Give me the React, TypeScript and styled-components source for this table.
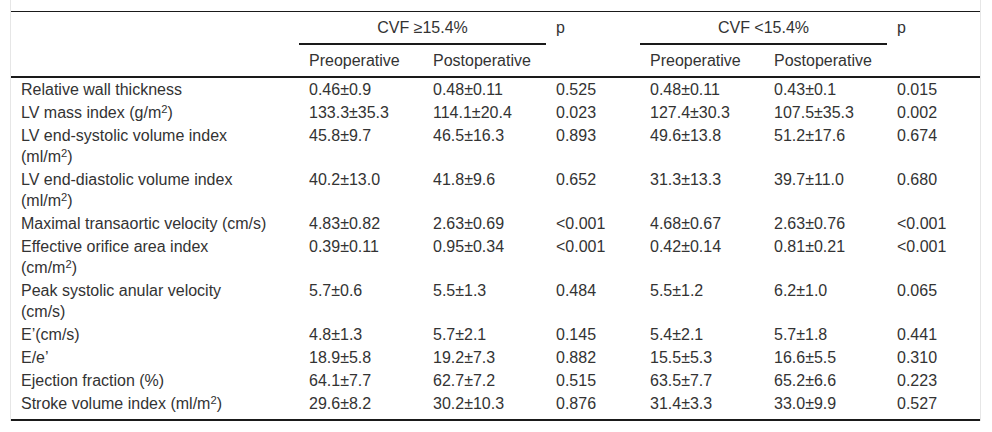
import React from "react";
import styled, { createGlobalStyle } from "styled-components";

const GlobalStyle = createGlobalStyle`
  body {
    margin: 0;
    background: #fff;
    font-family: "Liberation Sans", Arial, sans-serif;
  }
`;

type Row = {
  label: React.ReactNode;
  values: string[];
};

const M2 = ({ unit }: { unit: string }) => (
  <>
    ({unit}/m<Sup>2</Sup>)
  </>
);

const rows: Row[] = [
  {
    label: "Relative wall thickness",
    values: ["0.46±0.9", "0.48±0.11", "0.525", "0.48±0.11", "0.43±0.1", "0.015"],
  },
  {
    label: (
      <>
        LV mass index <M2 unit="g" />
      </>
    ),
    values: ["133.3±35.3", "114.1±20.4", "0.023", "127.4±30.3", "107.5±35.3", "0.002"],
  },
  {
    label: (
      <>
        LV end-systolic volume index <M2 unit="ml" />
      </>
    ),
    values: ["45.8±9.7", "46.5±16.3", "0.893", "49.6±13.8", "51.2±17.6", "0.674"],
  },
  {
    label: (
      <>
        LV end-diastolic volume index <M2 unit="ml" />
      </>
    ),
    values: ["40.2±13.0", "41.8±9.6", "0.652", "31.3±13.3", "39.7±11.0", "0.680"],
  },
  {
    label: "Maximal transaortic velocity (cm/s)",
    values: ["4.83±0.82", "2.63±0.69", "<0.001", "4.68±0.67", "2.63±0.76", "<0.001"],
  },
  {
    label: (
      <>
        Effective orifice area index <M2 unit="cm" />
      </>
    ),
    values: ["0.39±0.11", "0.95±0.34", "<0.001", "0.42±0.14", "0.81±0.21", "<0.001"],
  },
  {
    label: "Peak systolic anular velocity (cm/s)",
    values: ["5.7±0.6", "5.5±1.3", "0.484", "5.5±1.2", "6.2±1.0", "0.065"],
  },
  {
    label: "E’(cm/s)",
    values: ["4.8±1.3", "5.7±2.1", "0.145", "5.4±2.1", "5.7±1.8", "0.441"],
  },
  {
    label: "E/e’",
    values: ["18.9±5.8", "19.2±7.3", "0.882", "15.5±5.3", "16.6±5.5", "0.310"],
  },
  {
    label: "Ejection fraction (%)",
    values: ["64.1±7.7", "62.7±7.2", "0.515", "63.5±7.7", "65.2±6.6", "0.223"],
  },
  {
    label: (
      <>
        Stroke volume index <M2 unit="ml" />
      </>
    ),
    values: ["29.6±8.2", "30.2±10.3", "0.876", "31.4±3.3", "33.0±9.9", "0.527"],
  },
];

const colWidths = [288, 124, 123, 94, 124, 123, 93];

const App = () => {
  return (
    <>
      <GlobalStyle />
      <Frame>
        <Table>
          <colgroup>
            {colWidths.map((w, i) => (
              <col key={i} style={{ width: w }} />
            ))}
          </colgroup>
          <thead>
            <tr>
              <HeadCell rowSpan={2} $rule="thick" />
              <HeadCell colSpan={2} $center $rule="group">
                CVF ≥15.4%
              </HeadCell>
              <HeadCell rowSpan={2} $rule="thick">
                p
              </HeadCell>
              <HeadCell colSpan={2} $center $rule="group">
                CVF &lt;15.4%
              </HeadCell>
              <HeadCell rowSpan={2} $rule="thick">
                p
              </HeadCell>
            </tr>
            <tr>
              <HeadCell $rule="thick">Preoperative</HeadCell>
              <HeadCell $rule="thick">Postoperative</HeadCell>
              <HeadCell $rule="thick">Preoperative</HeadCell>
              <HeadCell $rule="thick">Postoperative</HeadCell>
            </tr>
          </thead>
          <tbody>
            {rows.map((row, i) => {
              const last = i === rows.length - 1;
              return (
                <tr key={i}>
                  <LabelCell $last={last}>{row.label}</LabelCell>
                  {row.values.map((v, j) => (
                    <ValueCell key={j} $last={last}>
                      {v}
                    </ValueCell>
                  ))}
                </tr>
              );
            })}
          </tbody>
        </Table>
      </Frame>
    </>
  );
};

export default App;

const Frame = styled.div`
  box-sizing: border-box;
  width: 971px;
  margin-left: 10px;
  padding-top: 11px;
  border-left: 1px solid #e6e6e6;
  border-right: 1px solid #e6e6e6;
`;

const Table = styled.table`
  width: 969px;
  table-layout: fixed;
  border-collapse: separate;
  border-spacing: 0;
  border-top: 1px solid #1a1a1a;
  border-bottom: 2px solid #1a1a1a;
  color: #333;
  font-size: 16px;
  line-height: 21px;
`;

const HeadCell = styled.th<{ $center?: boolean; $rule?: "group" | "thick" }>`
  padding: 5px 10px;
  font-weight: 400;
  text-align: ${({ $center }) => ($center ? "center" : "left")};
  vertical-align: top;
  white-space: nowrap;
  border-bottom: ${({ $rule }) => ($rule ? "2px solid #1a1a1a" : "none")};
`;

const BodyCell = styled.td<{ $last?: boolean }>`
  padding: 1px 10px ${({ $last }) => ($last ? "5px" : "1px")};
  vertical-align: top;
  text-align: left;
`;

const LabelCell = styled(BodyCell)`
  padding-right: 31px;
`;

const ValueCell = styled(BodyCell)`
  white-space: nowrap;
`;

const Sup = styled.sup`
  font-size: 0.7em;
  line-height: 0;
  vertical-align: 0.45em;
`;
